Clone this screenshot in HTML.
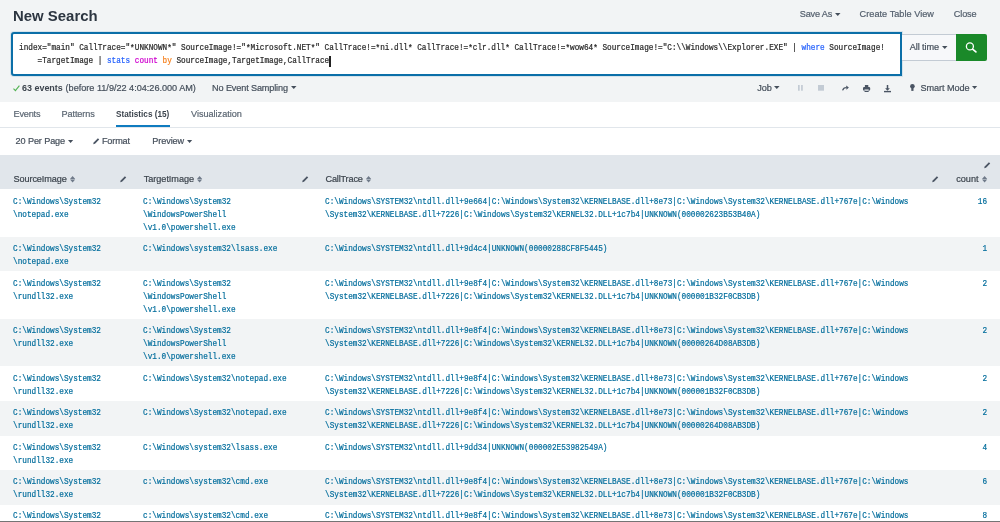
<!DOCTYPE html>
<html>
<head>
<meta charset="utf-8">
<title>New Search</title>
<style>
*{box-sizing:border-box;margin:0;padding:0}
html,body{width:1000px;height:522px;overflow:hidden;background:#fff}
body{font-family:"Liberation Sans",sans-serif;color:#3c444d;position:relative;font-size:9.15px}
#wrap{position:absolute;left:0;top:0;width:1000px;height:522px;will-change:transform;overflow:hidden}
.t{position:absolute;white-space:nowrap;font-size:9.15px;color:#454f5b;-webkit-text-stroke:0.2px currentColor}
.i{position:absolute;overflow:visible}
#top{position:absolute;left:0;top:0;width:1000px;height:102px;background:#f2f4f5}
#sbox{position:absolute;left:11.4px;top:32.2px;width:890.6px;height:43.4px;background:#fff;border:2px solid #0b6fa8;border-radius:3px 0 0 3px;box-shadow:0 0 0 1px rgba(11,111,168,0.12)}
.q{font-family:"Liberation Mono",monospace;font-size:8.4px;line-height:13.33px;color:#2a2a2a;white-space:pre;position:absolute;left:19.3px;transform:scaleX(0.9212);transform-origin:0 0;-webkit-text-stroke:0.22px currentColor}
.as{position:relative;top:1.5px}
.kb{color:#2662fc}.kp{color:#cf00cf}.ko{color:#f58220}
#time{position:absolute;left:902px;top:34px;width:55px;height:26.5px;border-top:1px solid #c3cbd4;border-bottom:1px solid #c3cbd4;background:#f7f8fa}
#go{position:absolute;left:956.2px;top:34px;width:30.8px;height:26.5px;background:#1a8929;border-radius:0 2px 2px 0}
#tabs{position:absolute;left:0;top:102px;width:1000px;height:26px;background:#fff;border-bottom:1px solid #e1e6eb}
#tabul{position:absolute;left:115.5px;top:124.6px;width:54.6px;height:2px;background:#0f7bbf}
#thead{position:absolute;left:0;top:155px;width:1000px;height:34px;background:#e1e6eb}
.rb{position:absolute;left:0;width:1000px;background:#f2f4f5}
.l{position:absolute;height:13px;line-height:13px;font-family:"Liberation Mono",monospace;font-size:8.4px;color:#006d9c;white-space:pre;transform:scaleX(0.9214);transform-origin:0 0;-webkit-text-stroke:0.2px currentColor}
.c1{left:13px}.c2{left:143px}.c3{left:325px}.c4{right:13px;text-align:right;transform-origin:100% 0}
</style>
</head>
<body>
<div id="wrap">
<div id="top"></div>
<div id="sbox"></div>
<div class="q" style="top:41.8px">index="main" CallTrace="<span class="as">*</span>UNKNOWN<span class="as">*</span>" SourceImage!="<span class="as">*</span>Microsoft.NET<span class="as">*</span>" CallTrace!=<span class="as">*</span>ni.dll<span class="as">*</span> CallTrace!=<span class="as">*</span>clr.dll<span class="as">*</span> CallTrace!=<span class="as">*</span>wow64<span class="as">*</span> SourceImage!="C:\\Windows\\Explorer.EXE" | <span class="kb">where</span> SourceImage!</div>
<div class="q" style="top:55px">    =TargetImage | <span class="kb">stats</span> <span class="kp">count</span> <span class="ko">by</span> SourceImage,TargetImage,CallTrace</div>
<div style="position:absolute;left:329.4px;top:56.2px;width:1.3px;height:10.4px;background:#222"></div>
<div id="time"></div>
<div id="go"><svg width="30.8" height="26.5" viewBox="0 0 30.8 26.5"><circle cx="13.9" cy="12.4" r="3.5" fill="none" stroke="#fff" stroke-width="1.3"/><path d="M16.6 15.2 L19.9 17.9" stroke="#fff" stroke-width="1.7" stroke-linecap="round"/></svg></div>
<div id="tabs"></div>
<div id="tabul"></div>
<div id="thead"></div>
<div class="t" style="left:13.20px;top:5.73px;line-height:20px;transform:scaleX(0.9825);transform-origin:0 50%;font-size:15.2px;font-weight:bold;color:#2c3540;-webkit-text-stroke:0">New Search</div>
<div class="t" style="left:799.80px;top:8.03px;line-height:12px;letter-spacing:-0.169px;color:#55606e">Save As</div>
<div class="t" style="left:859.60px;top:8.03px;line-height:12px;letter-spacing:0.039px;color:#55606e">Create Table View</div>
<div class="t" style="left:953.80px;top:8.03px;line-height:12px;letter-spacing:-0.129px;color:#55606e">Close</div>
<div class="t" style="left:909.80px;top:41.03px;line-height:12px;letter-spacing:-0.103px;">All time</div>
<div class="t" style="left:22.10px;top:81.73px;line-height:12px;transform:scaleX(0.9805);transform-origin:0 50%;font-weight:bold;color:#3c444d;-webkit-text-stroke:0">63 events</div>
<div class="t" style="left:65.60px;top:81.73px;line-height:12px;letter-spacing:-0.014px;">(before 11/9/22 4:04:26.000 AM)</div>
<div class="t" style="left:212.10px;top:81.73px;line-height:12px;letter-spacing:-0.137px;">No Event Sampling</div>
<div class="t" style="left:757.20px;top:81.73px;line-height:12px;letter-spacing:-0.073px;">Job</div>
<div class="t" style="left:920.50px;top:81.73px;line-height:12px;letter-spacing:-0.080px;">Smart Mode</div>
<div class="t" style="left:13.50px;top:108.43px;line-height:12px;letter-spacing:-0.184px;color:#5c6773">Events</div>
<div class="t" style="left:61.60px;top:108.43px;line-height:12px;letter-spacing:-0.123px;color:#5c6773">Patterns</div>
<div class="t" style="left:116.20px;top:108.43px;line-height:12px;transform:scaleX(0.8982);transform-origin:0 50%;font-weight:bold;color:#3c444d;-webkit-text-stroke:0">Statistics (15)</div>
<div class="t" style="left:191.10px;top:108.43px;line-height:12px;letter-spacing:-0.029px;color:#5c6773">Visualization</div>
<div class="t" style="left:15.60px;top:135.13px;line-height:12px;letter-spacing:-0.121px;">20 Per Page</div>
<div class="t" style="left:101.90px;top:135.13px;line-height:12px;letter-spacing:-0.151px;">Format</div>
<div class="t" style="left:152.20px;top:135.13px;line-height:12px;letter-spacing:-0.081px;">Preview</div>
<div class="t" style="left:13.60px;top:172.63px;line-height:12px;letter-spacing:-0.116px;color:#3c444d">SourceImage</div>
<div class="t" style="left:143.80px;top:172.63px;line-height:12px;letter-spacing:-0.049px;color:#3c444d">TargetImage</div>
<div class="t" style="left:325.50px;top:172.63px;line-height:12px;letter-spacing:-0.169px;color:#3c444d">CallTrace</div>
<div class="t" style="left:956.20px;top:172.63px;line-height:12px;letter-spacing:-0.006px;color:#3c444d">count</div>
<svg class="i" style="left:834.65px;top:12.60px" width="5.50" height="3.10" viewBox="0 0 5.50 3.10"><path d="M0 0H5.50L2.75 3.10Z" fill="#454f5b"/></svg>
<svg class="i" style="left:942.05px;top:45.60px" width="5.50" height="3.10" viewBox="0 0 5.50 3.10"><path d="M0 0H5.50L2.75 3.10Z" fill="#454f5b"/></svg>
<svg class="i" style="left:291.25px;top:86.40px" width="5.50" height="3.10" viewBox="0 0 5.50 3.10"><path d="M0 0H5.50L2.75 3.10Z" fill="#454f5b"/></svg>
<svg class="i" style="left:774.25px;top:86.40px" width="5.60" height="3.10" viewBox="0 0 5.60 3.10"><path d="M0 0H5.60L2.80 3.10Z" fill="#454f5b"/></svg>
<svg class="i" style="left:972.15px;top:86.40px" width="5.20" height="3.10" viewBox="0 0 5.20 3.10"><path d="M0 0H5.20L2.60 3.10Z" fill="#454f5b"/></svg>
<svg class="i" style="left:67.95px;top:139.80px" width="5.20" height="3.10" viewBox="0 0 5.20 3.10"><path d="M0 0H5.20L2.60 3.10Z" fill="#454f5b"/></svg>
<svg class="i" style="left:186.75px;top:139.80px" width="5.20" height="3.10" viewBox="0 0 5.20 3.10"><path d="M0 0H5.20L2.60 3.10Z" fill="#454f5b"/></svg>
<svg class="i" style="left:70.20px;top:175.60px" width="5.2" height="6.4" viewBox="0 0 5.2 6.4"><path d="M2.6 0L5.2 2.9H0Z M0 3.5H5.2L2.6 6.4Z" fill="#6f7a89"/></svg>
<svg class="i" style="left:196.90px;top:175.60px" width="5.2" height="6.4" viewBox="0 0 5.2 6.4"><path d="M2.6 0L5.2 2.9H0Z M0 3.5H5.2L2.6 6.4Z" fill="#6f7a89"/></svg>
<svg class="i" style="left:365.70px;top:175.60px" width="5.2" height="6.4" viewBox="0 0 5.2 6.4"><path d="M2.6 0L5.2 2.9H0Z M0 3.5H5.2L2.6 6.4Z" fill="#6f7a89"/></svg>
<svg class="i" style="left:981.90px;top:175.60px" width="5.2" height="6.4" viewBox="0 0 5.2 6.4"><path d="M2.6 0L5.2 2.9H0Z M0 3.5H5.2L2.6 6.4Z" fill="#6f7a89"/></svg>
<svg class="i" style="left:92.70px;top:138.10px" width="6.5" height="6.5" viewBox="0 0 6.5 6.5"><path d="M0.2 6.3L0.7 4.5L4.9 0.3L6.2 1.6L2 5.8Z" fill="#4a5463"/></svg>
<svg class="i" style="left:119.50px;top:175.50px" width="6.5" height="6.5" viewBox="0 0 6.5 6.5"><path d="M0.2 6.3L0.7 4.5L4.9 0.3L6.2 1.6L2 5.8Z" fill="#4a5463"/></svg>
<svg class="i" style="left:301.50px;top:175.50px" width="6.5" height="6.5" viewBox="0 0 6.5 6.5"><path d="M0.2 6.3L0.7 4.5L4.9 0.3L6.2 1.6L2 5.8Z" fill="#4a5463"/></svg>
<svg class="i" style="left:931.70px;top:175.50px" width="6.5" height="6.5" viewBox="0 0 6.5 6.5"><path d="M0.2 6.3L0.7 4.5L4.9 0.3L6.2 1.6L2 5.8Z" fill="#4a5463"/></svg>
<svg class="i" style="left:983.90px;top:162.20px" width="6.5" height="6.5" viewBox="0 0 6.5 6.5"><path d="M0.2 6.3L0.7 4.5L4.9 0.3L6.2 1.6L2 5.8Z" fill="#4a5463"/></svg>
<svg class="i" style="left:13px;top:85px" width="7" height="6.5" viewBox="0 0 7 6.5"><path d="M0.5 3.6L2.4 5.6L6.4 0.6" fill="none" stroke="#53b353" stroke-width="1.1"/></svg>
<svg class="i" style="left:797.9px;top:85.2px" width="5" height="6" viewBox="0 0 5 6"><path d="M0 0H1.7V5.8H0Z M3.1 0H4.8V5.8H3.1Z" fill="#c3cbd4"/></svg>
<svg class="i" style="left:818px;top:85.3px" width="6" height="6" viewBox="0 0 6 6"><rect width="6" height="5.7" fill="#c3cbd4"/></svg>
<svg class="i" style="left:842.1px;top:85.1px" width="7.2" height="6.5" viewBox="0 0 7.2 6.5"><path d="M0.6 5.5C1 3.6 2.2 2.5 4.6 2.5" fill="none" stroke="#4a5463" stroke-width="1.2"/><path d="M4.2 0.4L6.9 2.6L4.4 4.8Z" fill="#4a5463"/></svg>
<svg class="i" style="left:863.3px;top:84.7px" width="7.2" height="7.2" viewBox="0 0 7.2 7.2"><path d="M1.9 0H5.3V2H1.9Z" fill="#4a5463"/><path d="M1.2 1.9H6Q7.2 1.9 7.2 3.1V4.4Q7.2 5.6 6 5.6H5.7V4.4H1.5V5.6H1.2Q0 5.6 0 4.4V3.1Q0 1.9 1.2 1.9Z" fill="#4a5463"/><path d="M1.5 5.2Q3.6 6.4 5.7 5.2V6.4Q5.7 7.1 5 7.1H2.2Q1.5 7.1 1.5 6.4Z" fill="#4a5463"/></svg>
<svg class="i" style="left:884.3px;top:84.8px" width="7" height="7.4" viewBox="0 0 7 7.4"><path d="M2.75 0H4.25V3.3H5.9L3.5 5.7L1.1 3.3H2.75Z" fill="#4a5463"/><rect x="0" y="5.9" width="7" height="1.4" fill="#4a5463"/></svg>
<svg class="i" style="left:910.3px;top:84px" width="4.8" height="7" viewBox="0 0 4.8 7"><circle cx="2.4" cy="2.3" r="2.3" fill="#4a5463"/><path d="M1.3 3.8H3.5V6.9H1.3Z" fill="#4a5463"/></svg>
<div class="l c1" style="top:196px">C:\Windows\System32</div>
<div class="l c1" style="top:209px">\notepad.exe</div>
<div class="l c2" style="top:196px">C:\Windows\System32</div>
<div class="l c2" style="top:209px">\WindowsPowerShell</div>
<div class="l c2" style="top:222px">\v1.0\powershell.exe</div>
<div class="l c3" style="top:196px">C:\Windows\SYSTEM32\ntdll.dll+9e664|C:\Windows\System32\KERNELBASE.dll+8e73|C:\Windows\System32\KERNELBASE.dll+767e|C:\Windows</div>
<div class="l c3" style="top:209px">\System32\KERNELBASE.dll+7226|C:\Windows\System32\KERNEL32.DLL+1c7b4|UNKNOWN(000002623B53B40A)</div>
<div class="l c4" style="top:196px">16</div>
<div class="rb" style="top:236.67px;height:34.50px"></div>
<div class="l c1" style="top:243px">C:\Windows\System32</div>
<div class="l c1" style="top:256px">\notepad.exe</div>
<div class="l c2" style="top:243px">C:\Windows\system32\lsass.exe</div>
<div class="l c3" style="top:243px">C:\Windows\SYSTEM32\ntdll.dll+9d4c4|UNKNOWN(00000288CF8F5445)</div>
<div class="l c4" style="top:243px">1</div>
<div class="l c1" style="top:278px">C:\Windows\System32</div>
<div class="l c1" style="top:291px">\rundll32.exe</div>
<div class="l c2" style="top:278px">C:\Windows\System32</div>
<div class="l c2" style="top:291px">\WindowsPowerShell</div>
<div class="l c2" style="top:304px">\v1.0\powershell.exe</div>
<div class="l c3" style="top:278px">C:\Windows\SYSTEM32\ntdll.dll+9e8f4|C:\Windows\System32\KERNELBASE.dll+8e73|C:\Windows\System32\KERNELBASE.dll+767e|C:\Windows</div>
<div class="l c3" style="top:291px">\System32\KERNELBASE.dll+7226|C:\Windows\System32\KERNEL32.DLL+1c7b4|UNKNOWN(000001B32F0CB3DB)</div>
<div class="l c4" style="top:278px">2</div>
<div class="rb" style="top:318.84px;height:47.67px"></div>
<div class="l c1" style="top:325px">C:\Windows\System32</div>
<div class="l c1" style="top:338px">\rundll32.exe</div>
<div class="l c2" style="top:325px">C:\Windows\System32</div>
<div class="l c2" style="top:338px">\WindowsPowerShell</div>
<div class="l c2" style="top:351px">\v1.0\powershell.exe</div>
<div class="l c3" style="top:325px">C:\Windows\SYSTEM32\ntdll.dll+9e8f4|C:\Windows\System32\KERNELBASE.dll+8e73|C:\Windows\System32\KERNELBASE.dll+767e|C:\Windows</div>
<div class="l c3" style="top:338px">\System32\KERNELBASE.dll+7226|C:\Windows\System32\KERNEL32.DLL+1c7b4|UNKNOWN(00000264D08AB3DB)</div>
<div class="l c4" style="top:325px">2</div>
<div class="l c1" style="top:373px">C:\Windows\System32</div>
<div class="l c1" style="top:386px">\rundll32.exe</div>
<div class="l c2" style="top:373px">C:\Windows\System32\notepad.exe</div>
<div class="l c3" style="top:373px">C:\Windows\SYSTEM32\ntdll.dll+9e8f4|C:\Windows\System32\KERNELBASE.dll+8e73|C:\Windows\System32\KERNELBASE.dll+767e|C:\Windows</div>
<div class="l c3" style="top:386px">\System32\KERNELBASE.dll+7226|C:\Windows\System32\KERNEL32.DLL+1c7b4|UNKNOWN(000001B32F0CB3DB)</div>
<div class="l c4" style="top:373px">2</div>
<div class="rb" style="top:401.01px;height:34.50px"></div>
<div class="l c1" style="top:407px">C:\Windows\System32</div>
<div class="l c1" style="top:420px">\rundll32.exe</div>
<div class="l c2" style="top:407px">C:\Windows\System32\notepad.exe</div>
<div class="l c3" style="top:407px">C:\Windows\SYSTEM32\ntdll.dll+9e8f4|C:\Windows\System32\KERNELBASE.dll+8e73|C:\Windows\System32\KERNELBASE.dll+767e|C:\Windows</div>
<div class="l c3" style="top:420px">\System32\KERNELBASE.dll+7226|C:\Windows\System32\KERNEL32.DLL+1c7b4|UNKNOWN(00000264D08AB3DB)</div>
<div class="l c4" style="top:407px">2</div>
<div class="l c1" style="top:442px">C:\Windows\System32</div>
<div class="l c1" style="top:455px">\rundll32.exe</div>
<div class="l c2" style="top:442px">C:\Windows\system32\lsass.exe</div>
<div class="l c3" style="top:442px">C:\Windows\SYSTEM32\ntdll.dll+9dd34|UNKNOWN(000002E53982549A)</div>
<div class="l c4" style="top:442px">4</div>
<div class="rb" style="top:470.01px;height:34.50px"></div>
<div class="l c1" style="top:476px">C:\Windows\System32</div>
<div class="l c1" style="top:489px">\rundll32.exe</div>
<div class="l c2" style="top:476px">c:\windows\system32\cmd.exe</div>
<div class="l c3" style="top:476px">C:\Windows\SYSTEM32\ntdll.dll+9e8f4|C:\Windows\System32\KERNELBASE.dll+8e73|C:\Windows\System32\KERNELBASE.dll+767e|C:\Windows</div>
<div class="l c3" style="top:489px">\System32\KERNELBASE.dll+7226|C:\Windows\System32\KERNEL32.DLL+1c7b4|UNKNOWN(000001B32F0CB3DB)</div>
<div class="l c4" style="top:476px">6</div>
<div class="l c1" style="top:510px">C:\Windows\System32</div>
<div class="l c1" style="top:523px">\rundll32.exe</div>
<div class="l c2" style="top:510px">c:\windows\system32\cmd.exe</div>
<div class="l c3" style="top:510px">C:\Windows\SYSTEM32\ntdll.dll+9e8f4|C:\Windows\System32\KERNELBASE.dll+8e73|C:\Windows\System32\KERNELBASE.dll+767e|C:\Windows</div>
<div class="l c3" style="top:523px">\System32\KERNELBASE.dll+7226|C:\Windows\System32\KERNEL32.DLL+1c7b4|UNKNOWN(00000264D08AB3DB)</div>
<div class="l c4" style="top:510px">8</div>

<div style="position:absolute;left:0;top:520.75px;width:1000px;height:1.25px;background:#747474"></div>
</div>
</body>
</html>
